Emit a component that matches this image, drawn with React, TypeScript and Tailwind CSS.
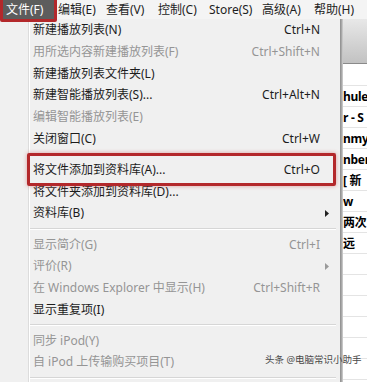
import React from "react";

type Item =
  | { kind: "sep" }
  | { kind: "item"; label: string; shortcut?: string; disabled?: boolean; sub?: boolean };

const items: Item[] = [
  { kind: "item", label: "新建播放列表(N)", shortcut: "Ctrl+N" },
  { kind: "item", label: "用所选内容新建播放列表(F)", shortcut: "Ctrl+Shift+N", disabled: true },
  { kind: "item", label: "新建播放列表文件夹(L)" },
  { kind: "item", label: "新建智能播放列表(S)...", shortcut: "Ctrl+Alt+N" },
  { kind: "item", label: "编辑智能播放列表(E)", disabled: true },
  { kind: "item", label: "关闭窗口(C)", shortcut: "Ctrl+W" },
  { kind: "sep" },
  { kind: "item", label: "将文件添加到资料库(A)...", shortcut: "Ctrl+O" },
  { kind: "item", label: "将文件夹添加到资料库(D)..." },
  { kind: "item", label: "资料库(B)", sub: true },
  { kind: "sep" },
  { kind: "item", label: "显示简介(G)", shortcut: "Ctrl+I", disabled: true },
  { kind: "item", label: "评价(R)", sub: true, disabled: true },
  { kind: "item", label: "在 Windows Explorer 中显示(H)", shortcut: "Ctrl+Shift+R", disabled: true },
  { kind: "item", label: "显示重复项(I)" },
  { kind: "sep" },
  { kind: "item", label: "同步 iPod(Y)", disabled: true },
  { kind: "item", label: "自 iPod 上传输购买项目(T)", disabled: true },
  { kind: "sep" },
];

const topMenus = [
  { label: "编辑(E)", w: "w-[48px]" },
  { label: "查看(V)", w: "w-[52px]" },
  { label: "控制(C)", w: "w-[51px]" },
  { label: "Store(S)", w: "w-[53px]" },
  { label: "高级(A)", w: "w-[52px]" },
  { label: "帮助(H)", w: "w-[52px]" },
];

// what shows of the song list, to the right of the open menu
const listRows = ["", "hule", "r - S", "nmy", "nber", "[ 新", "w", "两次", "远", "", "", "", "", "", ""];

function Arrow({ disabled }: { disabled?: boolean }) {
  return (
    <svg width="4" height="7" viewBox="0 0 4 7">
      <path d="M0 0 L4 3.5 L0 7 Z" fill={disabled ? "#9a9a9a" : "#222"} />
    </svg>
  );
}

export default function App() {
  return (
    <div
      className="relative w-[367px] h-[382px] overflow-hidden bg-white text-[12px]"
      style={{ fontFamily: '"Noto Sans", "Noto Sans CJK SC", sans-serif' }}
    >
      {/* menu bar */}
      <div className="flex h-[19px] items-center bg-[#f4f4f4] text-[#1e1e1e] leading-[19px]">
        <div className="ml-[3px] w-[51px] h-[19px] bg-[#5d5d5d] pl-[3px] text-white">文件(F)</div>
        {topMenus.map((m) => (
          <div key={m.label} className={`${m.w} pl-[4px] whitespace-nowrap`}>
            {m.label}
          </div>
        ))}
      </div>

      <div className="flex">
        {/* dropdown */}
        <div className="flex w-[340px] bg-[#f0f0f0] pt-[0.5px]">
          <div className="w-[29px] border-r border-[#dcdcdc]" />
          <div className="w-px bg-white" />
          <div className="flex-1 flex flex-col">
            {items.map((it, i) =>
              it.kind === "sep" ? (
                <div key={i} className="h-[9.5px] flex flex-col justify-center pr-[4px]">
                  <div className="h-px bg-[#d6d6d6]" />
                  <div className="h-px bg-white" />
                </div>
              ) : (
                <div
                  key={i}
                  className={`grid grid-cols-[1fr_auto_20px] items-center h-[21.7px] pl-[3px] whitespace-nowrap ${
                    it.disabled ? "text-[#959595]" : "text-[#1c1c1c]"
                  }`}
                >
                  <span>{it.label}</span>
                  <span>{it.shortcut ?? ""}</span>
                  <span className="flex items-center pl-[5px]">{it.sub ? <Arrow disabled={it.disabled} /> : null}</span>
                </div>
              )
            )}
          </div>
        </div>

        {/* menu shadow */}
        <div className="w-[3px] bg-gradient-to-r from-[#8c8c8c] via-[#a8a8a8] to-[#d4d4d4]" />

        {/* list behind the menu */}
        <div className="flex-1 flex flex-col min-w-0">
          <div className="h-[44px] bg-gradient-to-b from-[#e8e8e8] to-[#c2c2c2]" />
          <div className="h-px bg-[#8a8a8a]" />
          {listRows.map((t, i) => (
            <div
              key={i}
              className={`${i === 0 ? "h-[22px]" : "h-[21px]"} border-b border-[#e4e4e4] overflow-hidden whitespace-nowrap font-bold text-black leading-[21px] tracking-[-0.3px]`}
            >
              {t}
            </div>
          ))}
        </div>
      </div>

      {/* red highlight boxes */}
      <div className="absolute left-0 top-[-4px] w-[57px] h-[26px] border-[3px] border-[#b3282b] rounded-[2px]" />
      <div className="absolute left-[27px] top-[153px] w-[309px] h-[33px] border-[3px] border-[#b3282b] rounded-[2px] shadow-[0_0_4px_rgba(200,60,60,0.45)]" />

      {/* watermark */}
      <div className="absolute left-[265px] top-[354px] text-[9.5px] leading-[12px] text-[#4a4a4a] whitespace-nowrap">
        头条 @电脑常识小助手
      </div>
    </div>
  );
}
